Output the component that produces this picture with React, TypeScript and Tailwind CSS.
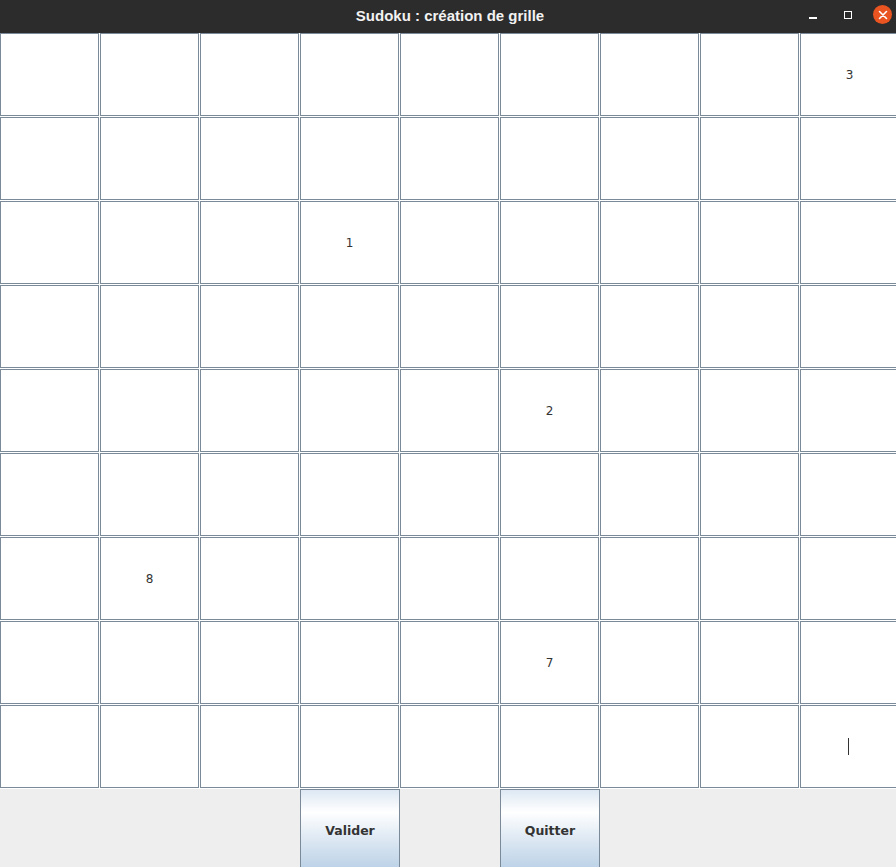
import React from "react";

const values: Record<string, string> = {
  "0-8": "3",
  "2-3": "1",
  "4-5": "2",
  "6-1": "8",
  "7-5": "7",
};

function Cell({ r, c }: { r: number; c: number }) {
  const v = values[`${r}-${c}`];
  const caret = r === 8 && c === 8;
  return (
    <div className="w-[100px] h-[84px] bg-white pr-px pb-px">
      <div className="w-full h-full border border-[#7a8a99] flex items-center justify-center text-[12px] text-[#333333] font-['DejaVu_Sans',sans-serif]">
        {v}
        {caret && <div className="w-px h-[17px] bg-[#333333] ml-[-2px]" />}
      </div>
    </div>
  );
}

function Btn({ label }: { label: string }) {
  return (
    <div className="w-[100px] h-[84px] border border-[#7a8a99] bg-[linear-gradient(to_bottom,#dde8f3_0%,#ffffff_27%,#dde8f3_60%,#b8cfe5_100%)] flex items-center justify-center text-[12.5px] font-bold text-[#333333] font-['DejaVu_Sans',sans-serif]">
      {label}
    </div>
  );
}

export default function App() {
  const rows = Array.from({ length: 9 }, (_, i) => i);
  return (
    <div className="w-[896px] h-[867px] overflow-hidden bg-[#eeeeee] flex flex-col">
      <div className="relative h-[33px] shrink-0 bg-[#2c2c2c] flex items-center justify-center">
        <span className="text-[15px] font-bold text-[#f2f2f2] font-['Liberation_Sans',sans-serif] leading-none mt-[-2px] ml-[4px]">
          Sudoku : création de grille
        </span>
        <div className="absolute right-[4px] top-0 h-[33px] flex items-center">
          <div className="w-[8px] h-[2px] bg-white ml-0 mt-[2px]" />
          <div className="w-[8px] h-[8px] border-[1.5px] border-white ml-[27px] mt-[-4px]" />
          <div className="w-[19px] h-[19px] rounded-full bg-[#e95420] ml-[21px] mt-[-4px] flex items-center justify-center">
            <svg width="10" height="10" viewBox="0 0 10 10">
              <path d="M1.5 1.5 L8.5 8.5 M8.5 1.5 L1.5 8.5" stroke="white" strokeWidth="1.6" strokeLinecap="round" />
            </svg>
          </div>
        </div>
      </div>
      <div className="w-[900px] flex flex-col shrink-0">
        {rows.map((r) => (
          <div key={r} className="flex">
            {rows.map((c) => (
              <Cell key={c} r={r} c={c} />
            ))}
          </div>
        ))}
      </div>
      <div className="w-[900px] flex shrink-0">
        <div className="w-[300px]" />
        <Btn label="Valider" />
        <div className="w-[100px]" />
        <Btn label="Quitter" />
      </div>
    </div>
  );
}
